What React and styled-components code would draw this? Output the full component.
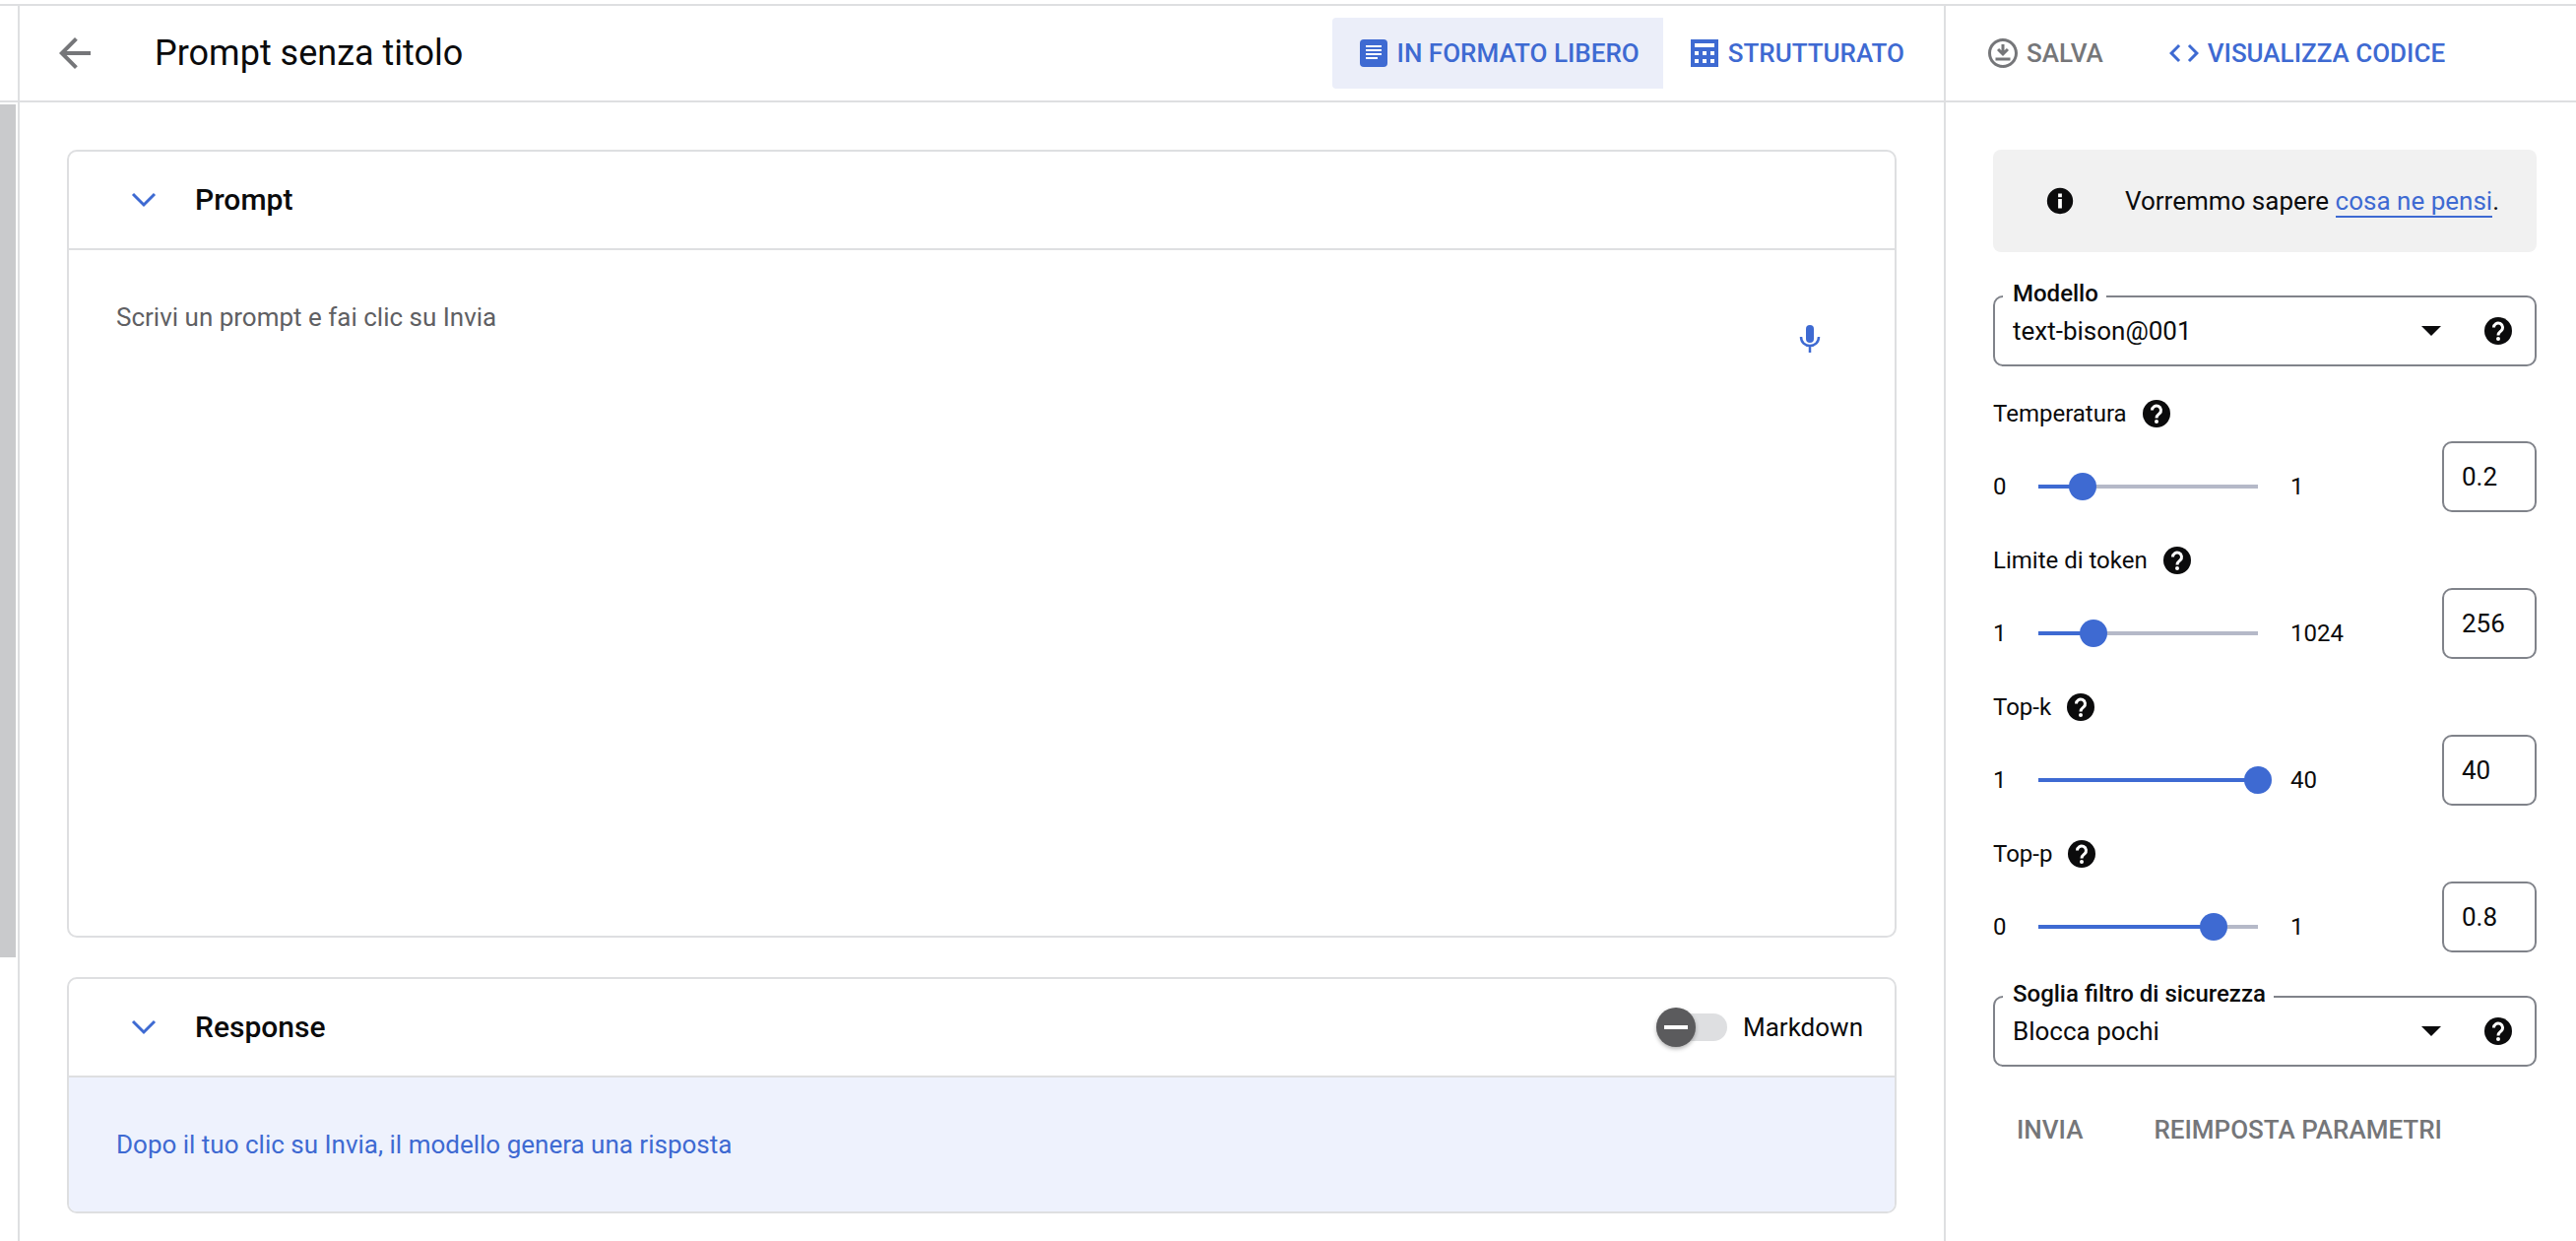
import React, { useState } from "react";
import styled, { createGlobalStyle, css } from "styled-components";
import { MdArrowBack, MdCode, MdOutlineDownloadForOffline } from "react-icons/md";

const colors = {
  text: "#0b0b0c",
  muted: "#5f6063",
  disabled: "#757679",
  blue: "#3e6ad2",
  line: "#dedfe1",
  field: "#80838a",
};

const GlobalStyle = createGlobalStyle`
  * {
    box-sizing: border-box;
  }

  body {
    margin: 0;
    background: #ffffff;
    color: ${colors.text};
    font-family: Roboto, "Liberation Sans", sans-serif;
    font-size: 26px;
  }

  button, input, select, textarea {
    font: inherit;
    color: inherit;
  }
`;

// === Page ===
const Page = styled.div`
  display: flex;
  flex-direction: column;
  min-height: 100vh;
  padding-top: 4px;
`;

const Shell = styled.div`
  flex: 1;
  display: flex;
  border-top: 2px solid ${colors.line};
`;

const Bar = styled.header`
  display: flex;
  align-items: center;
  height: 98px;
  border-bottom: 2px solid ${colors.line};
`;

const Rail = styled.div`
  display: flex;
  flex-direction: column;
  width: 20px;
  border-right: 2px solid ${colors.line};
`;

const RailTrack = styled.div`
  flex: 1;
  padding: 2px 2px 0 0;
`;

const RailThumb = styled.div`
  height: 75%;
  background: #c9cacc;
`;

const Main = styled.main`
  flex: 1;
  display: flex;
  flex-direction: column;
  min-width: 0;
`;

const Side = styled.aside`
  width: 642px;
  border-left: 2px solid ${colors.line};
`;

const MainBar = styled(Bar)`
  padding: 0 16px 0 32px;
`;

const SideBar = styled(Bar)`
  padding-left: 24px;
  gap: 32px;
`;

// === Toolbar ===
const IconButton = styled.button`
  display: flex;
  padding: 0;
  border: none;
  background: none;
  color: ${(p) => p.$color || colors.blue};
  cursor: pointer;
`;

const Title = styled.h1`
  flex: 1;
  margin: 0 0 0 57px;
  font-size: 36px;
  line-height: 48px;
  font-weight: 400;
`;

const TextButton = styled.button`
  display: flex;
  align-items: center;
  gap: 6px;
  height: 72px;
  padding: 0 16px;
  border: none;
  border-radius: 4px;
  background: none;
  color: ${(p) => (p.disabled ? colors.disabled : colors.blue)};
  font-weight: 500;
  white-space: nowrap;
  cursor: pointer;
`;

const ModeButton = styled(TextButton)`
  gap: 10px;
  padding: 0 24px 0 28px;
  border-radius: 4px 0 0 4px;

  ${(p) =>
    p.$active &&
    css`
      background: #ebeef9;
    `}
`;

// === Cards ===
const Cards = styled.div`
  flex: 1;
  display: flex;
  flex-direction: column;
  gap: 40px;
  padding: 48px 48px 28px;
`;

const Card = styled.section`
  display: flex;
  flex-direction: column;
  flex: ${(p) => (p.$grow ? 1 : "none")};
  border: 2px solid ${colors.line};
  border-radius: 10px;
  overflow: hidden;
`;

const CardHead = styled.div`
  display: flex;
  align-items: center;
  height: 100px;
  padding: 0 32px 0 58px;
  border-bottom: 2px solid ${colors.line};
`;

const CardTitle = styled.h2`
  flex: 1;
  margin: 0 0 0 34px;
  font-size: 30px;
  line-height: 40px;
  font-weight: 500;
`;

const PromptBody = styled.div`
  flex: 1;
  display: flex;
  align-items: flex-start;
  padding: 48px 68px 40px 48px;
`;

const PromptInput = styled.textarea`
  flex: 1;
  align-self: stretch;
  padding: 0;
  border: none;
  outline: none;
  resize: none;
  line-height: 40px;

  &::placeholder {
    color: ${colors.muted};
    opacity: 1;
  }
`;

const MicButton = styled(IconButton)`
  margin-top: 24px;
`;

const ResponseBody = styled.p`
  margin: 0;
  padding: 48px;
  background: #eef2fd;
  color: ${colors.blue};
  line-height: 40px;
`;

const SwitchLabel = styled.label`
  display: flex;
  align-items: center;
  gap: 16px;
  cursor: pointer;
`;

const Switch = styled.input`
  appearance: none;
  display: flex;
  align-items: center;
  width: 72px;
  height: 28px;
  margin: 0;
  border-radius: 14px;
  background: ${colors.line};

  &::before {
    content: "";
    width: 40px;
    height: 40px;
    border-radius: 50%;
    background: linear-gradient(#ffffff, #ffffff) center / 24px 4px no-repeat #5b5b5d;
    box-shadow: 0 2px 4px rgba(0, 0, 0, 0.3);
  }

  &:checked {
    justify-content: flex-end;
  }
`;

// === Side panel ===
const Settings = styled.div`
  padding: 48px 40px 40px 48px;
`;

const Notice = styled.div`
  display: flex;
  align-items: center;
  gap: 50px;
  height: 104px;
  padding: 0 38px 0 52px;
  border-radius: 8px;
  background: #f1f1f1;
  white-space: nowrap;

  a {
    border-bottom: 2px solid ${colors.blue};
    color: ${colors.blue};
    text-decoration: none;
  }
`;

const SelectBox = styled.div`
  position: relative;
  display: flex;
  align-items: center;
  height: 72px;
  margin-top: 44px;
  padding-right: 20px;
  border: 2px solid ${colors.field};
  border-radius: 10px;
`;

const SelectLabel = styled.label`
  position: absolute;
  top: -20px;
  left: 8px;
  padding: 0 8px 0 10px;
  background: #ffffff;
  font-size: 24px;
  line-height: 32px;
  font-weight: 500;
`;

const Select = styled.select`
  flex: 1;
  align-self: stretch;
  appearance: none;
  padding: 0 0 0 18px;
  border: none;
  outline: none;
  background: none;
`;

const Caret = styled.span`
  margin-right: 41px;
  border: 10px solid transparent;
  border-top-color: ${colors.text};
  border-bottom: none;
  pointer-events: none;
`;

const Param = styled.div`
  margin-top: ${(p) => (p.$first ? 31 : 32)}px;
`;

const ParamHead = styled.div`
  display: flex;
  align-items: center;
  gap: 13px;
  height: 34px;
  font-size: 24px;
`;

const ParamRow = styled.div`
  display: flex;
  align-items: center;
  margin-top: 11px;
`;

const Bound = styled.span`
  width: ${(p) => p.$width || "auto"};
  padding-top: 20px;
  font-size: 24px;
  line-height: 32px;
`;

const Range = styled.input.attrs((p) => ({
  type: "range",
  style: { "--ratio": p.$ratio },
}))`
  appearance: none;
  width: 251px;
  height: 28px;
  margin: 20px 19px 0 0;
  background:
    linear-gradient(${colors.blue}, ${colors.blue}) 14px 50% / calc((100% - 28px) * var(--ratio)) 4px no-repeat,
    linear-gradient(#b5b9c8, #b5b9c8) 14px 50% / calc(100% - 28px) 4px no-repeat;

  &::-webkit-slider-thumb {
    appearance: none;
    width: 28px;
    height: 28px;
    border: none;
    border-radius: 50%;
    background: ${colors.blue};
  }
`;

const NumberInput = styled.input`
  width: 96px;
  height: 72px;
  margin-left: auto;
  padding: 0 0 0 18px;
  border: 2px solid ${colors.field};
  border-radius: 10px;
  outline: none;
`;

const Actions = styled.div`
  display: flex;
  gap: 40px;
  margin-top: 28px;
  padding-left: 8px;
`;

// === Icons ===
const FreeFormIcon = () => (
  <svg width="28" height="28" viewBox="0 0 28 28" aria-hidden="true">
    <rect width="28" height="28" rx="4" fill="currentColor" />
    <path d="M6 7h16M6 11h16M6 15h16M6 19h12" stroke="#ffffff" strokeWidth="2" />
  </svg>
);

const StructuredIcon = () => (
  <svg width="28" height="28" viewBox="0 0 28 28" aria-hidden="true">
    <rect width="28" height="28" fill="currentColor" />
    <path
      d="M4 4h20v4H4zM4 12h4v4H4zM12 12h4v4h-4zM20 12h4v4h-4zM4 20h4v4H4zM12 20h4v4h-4zM20 20h4v4h-4z"
      fill="#ffffff"
    />
  </svg>
);

const ChevronIcon = () => (
  <svg width="36" height="36" viewBox="0 0 36 36" fill="none" aria-hidden="true">
    <path d="M7 12l11 11 11-11" stroke="currentColor" strokeWidth="3" />
  </svg>
);

const MicIcon = () => (
  <svg width="36" height="36" viewBox="0 0 36 36" fill="none" aria-hidden="true">
    <rect x="14" y="4" width="8" height="18" rx="4" fill="currentColor" />
    <path d="M9 16c0 5.500 4 9 9 9s9-3.500 9-9M18 25v7" stroke="currentColor" strokeWidth="2.500" />
  </svg>
);

const HelpIcon = () => (
  <svg width="34" height="34" viewBox="0 0 34 34" fill="none" aria-hidden="true">
    <circle cx="17" cy="17" r="14" fill="currentColor" />
    <path
      d="M12.500 13.500a4.500 4.500 0 1 1 7.500 3.400c-1.700 1.400-3 2-3 4.600"
      stroke="#ffffff"
      strokeWidth="3"
    />
    <circle cx="17" cy="25" r="2" fill="#ffffff" />
  </svg>
);

const InfoIcon = () => (
  <svg width="34" height="34" viewBox="0 0 34 34" aria-hidden="true">
    <circle cx="17" cy="17" r="14" fill="currentColor" />
    <path d="M15 9h4v4h-4zM15 15h4v10h-4z" fill="#ffffff" />
  </svg>
);

const HelpButton = ({ topic }) => (
  <IconButton type="button" aria-label={`Guida: ${topic}`} $color={colors.text}>
    <HelpIcon />
  </IconButton>
);

const SelectField = ({ id, label, options }) => (
  <SelectBox>
    <SelectLabel htmlFor={id}>{label}</SelectLabel>
    <Select id={id}>
      {options.map((option) => (
        <option key={option}>{option}</option>
      ))}
    </Select>
    <Caret />
    <HelpButton topic={label} />
  </SelectBox>
);

const params = [
  { id: "temperature", label: "Temperatura", min: 0, max: 1, step: 0.1, value: 0.2 },
  { id: "tokens", label: "Limite di token", min: 1, max: 1024, step: 1, value: 256 },
  { id: "top-k", label: "Top-k", min: 1, max: 40, step: 1, value: 40 },
  { id: "top-p", label: "Top-p", min: 0, max: 1, step: 0.1, value: 0.8 },
];

const ParamField = ({ param, first }) => {
  const { id, label, min, max, step } = param;
  const [value, setValue] = useState(param.value);
  const handleChange = (e) => setValue(e.target.value);

  return (
    <Param $first={first}>
      <ParamHead>
        <label htmlFor={id}>{label}</label>
        <HelpButton topic={label} />
      </ParamHead>
      <ParamRow>
        <Bound $width="32px">{min}</Bound>
        <Range
          id={id}
          min={min}
          max={max}
          step={step}
          value={value}
          onChange={handleChange}
          $ratio={(value - min) / (max - min)}
        />
        <Bound>{max}</Bound>
        <NumberInput aria-label={label} value={value} onChange={handleChange} />
      </ParamRow>
    </Param>
  );
};

const App = () => {
  const [mode, setMode] = useState("free");
  const [prompt, setPrompt] = useState("");
  const [markdown, setMarkdown] = useState(false);

  return (
    <Page>
      <GlobalStyle />
      <Shell>
        <Rail>
          <Bar as="div" />
          <RailTrack>
            <RailThumb />
          </RailTrack>
        </Rail>

        <Main>
          <MainBar>
            <IconButton type="button" aria-label="Indietro" $color={colors.disabled}>
              <MdArrowBack size={48} />
            </IconButton>
            <Title>Prompt senza titolo</Title>
            <ModeButton type="button" $active={mode === "free"} onClick={() => setMode("free")}>
              <FreeFormIcon />
              IN FORMATO LIBERO
            </ModeButton>
            <ModeButton
              type="button"
              $active={mode === "structured"}
              onClick={() => setMode("structured")}
            >
              <StructuredIcon />
              STRUTTURATO
            </ModeButton>
          </MainBar>

          <Cards>
            <Card $grow>
              <CardHead>
                <IconButton type="button" aria-label="Comprimi prompt">
                  <ChevronIcon />
                </IconButton>
                <CardTitle>Prompt</CardTitle>
              </CardHead>
              <PromptBody>
                <PromptInput
                  aria-label="Prompt"
                  placeholder="Scrivi un prompt e fai clic su Invia"
                  value={prompt}
                  onChange={(e) => setPrompt(e.target.value)}
                />
                <MicButton type="button" aria-label="Detta il prompt">
                  <MicIcon />
                </MicButton>
              </PromptBody>
            </Card>

            <Card>
              <CardHead>
                <IconButton type="button" aria-label="Comprimi risposta">
                  <ChevronIcon />
                </IconButton>
                <CardTitle>Response</CardTitle>
                <SwitchLabel>
                  <Switch
                    type="checkbox"
                    role="switch"
                    checked={markdown}
                    onChange={(e) => setMarkdown(e.target.checked)}
                  />
                  Markdown
                </SwitchLabel>
              </CardHead>
              <ResponseBody>Dopo il tuo clic su Invia, il modello genera una risposta</ResponseBody>
            </Card>
          </Cards>
        </Main>

        <Side>
          <SideBar>
            <TextButton type="button" disabled>
              <MdOutlineDownloadForOffline size={36} />
              SALVA
            </TextButton>
            <TextButton type="button">
              <MdCode size={36} />
              VISUALIZZA CODICE
            </TextButton>
          </SideBar>

          <Settings>
            <Notice>
              <InfoIcon />
              <span>
                Vorremmo sapere <a href="#feedback">cosa ne pensi</a>.
              </span>
            </Notice>
            <SelectField id="model" label="Modello" options={["text-bison@001"]} />
            {params.map((param, index) => (
              <ParamField key={param.id} param={param} first={index === 0} />
            ))}
            <SelectField
              id="safety"
              label="Soglia filtro di sicurezza"
              options={["Blocca pochi", "Blocca alcuni", "Blocca quasi tutti"]}
            />
            <Actions>
              <TextButton type="button" disabled>
                INVIA
              </TextButton>
              <TextButton type="button" disabled>
                REIMPOSTA PARAMETRI
              </TextButton>
            </Actions>
          </Settings>
        </Side>
      </Shell>
    </Page>
  );
};

export default App;
